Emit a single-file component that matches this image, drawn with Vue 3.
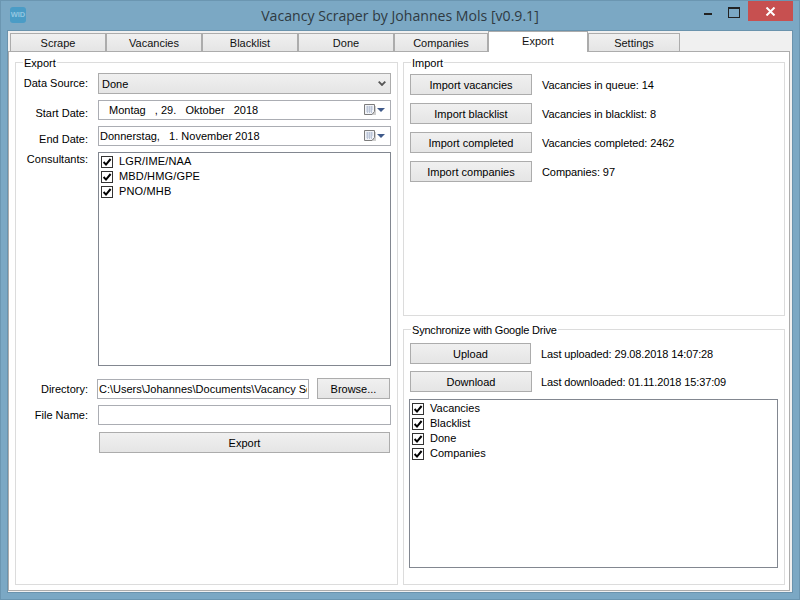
<template>
  <div class="window">
    <div class="titlebar">
      <div class="app-icon">WID</div>
      <div class="title">Vacancy Scraper by Johannes Mols [v0.9.1]</div>
      <div class="win-controls">
        <span class="win-min"></span>
        <span class="win-max"></span>
        <span class="win-close">
          <svg width="11" height="9" viewBox="0 0 11 9">
            <path d="M1.5 0.5 L9.5 8.5 M9.5 0.5 L1.5 8.5" stroke="#fff" stroke-width="2" fill="none" />
          </svg>
        </span>
      </div>
    </div>

    <div class="client">
      <div class="tabs">
        <div
          v-for="tab in tabs"
          :key="tab.name"
          class="tab"
          :class="{ active: tab.name === activeTab }"
          :style="{ width: tab.width + 'px' }"
        >
          {{ tab.name }}
        </div>
      </div>

      <div class="page">
        <div class="group group-export">
          <div class="legend">Export</div>

          <div class="row row-source">
            <label class="field-label">Data Source:</label>
            <div class="combo">
              <span>Done</span>
              <svg class="chevron" width="8" height="5" viewBox="0 0 8 5">
                <path d="M0.7 0.7 L4 4 L7.3 0.7" stroke="#555" stroke-width="1.8" fill="none" />
              </svg>
            </div>
          </div>

          <div v-for="d in dates" :key="d.label" class="row row-date">
            <label class="field-label date-label">{{ d.label }}</label>
            <div class="datebox" :class="d.cls">
              <span class="date-text">{{ d.text }}</span>
              <svg class="cal" width="21" height="14" viewBox="0 0 21 14">
                <path d="M2 3 H12 V12 H2 Z" fill="#d0d0d0" />
                <path d="M0.5 1.5 H10.5 V8.5 L8 11.5 H0.5 Z" fill="#f1f3f7" stroke="#7c7c7c" />
                <path d="M2 4 H9 M2 6 H9 M2 8 H8 M3.5 3 V10 M5.5 3 V10 M7.5 3 V10" stroke="#bcc6d8" />
                <path d="M13 5 H21 L17 9 Z" fill="#3f5a8a" />
              </svg>
            </div>
          </div>

          <div class="row row-consultants">
            <label class="field-label top-label">Consultants:</label>
            <div class="checklist consultants">
              <div v-for="c in consultants" :key="c" class="check-row">
                <svg class="check" width="12" height="12" viewBox="0 0 12 12">
                  <rect x="0.5" y="0.5" width="11" height="11" fill="#fff" stroke="#333" />
                  <path d="M2.6 6 L5 8.6 L9.6 3" stroke="#000" stroke-width="2" fill="none" />
                </svg>
                <span>{{ c }}</span>
              </div>
            </div>
          </div>

          <div class="row row-directory">
            <label class="field-label">Directory:</label>
            <input class="textbox dir-input" type="text" :value="directory" readonly />
            <button class="btn browse-btn" type="button">Browse...</button>
          </div>

          <div class="row row-file">
            <label class="field-label">File Name:</label>
            <input class="textbox file-input" type="text" />
          </div>

          <button class="btn export-btn" type="button">Export</button>
        </div>

        <div class="right-col">
          <div class="group group-import">
            <div class="legend">Import</div>
            <div v-for="item in imports" :key="item.button" class="action-row">
              <button class="btn action-btn" type="button">{{ item.button }}</button>
              <span class="action-text">{{ item.text }}</span>
            </div>
          </div>

          <div class="group group-sync">
            <div class="legend sync-legend">Synchronize with Google Drive</div>
            <div class="action-row sync-row">
              <button class="btn action-btn upload-btn" type="button">Upload</button>
              <span class="action-text">Last uploaded: 29.08.2018 14:07:28</span>
            </div>
            <div class="action-row sync-row">
              <button class="btn action-btn" type="button">Download</button>
              <span class="action-text">Last downloaded: 01.11.2018 15:37:09</span>
            </div>
            <div class="checklist sync-list">
              <div v-for="s in syncItems" :key="s" class="check-row">
                <svg class="check" width="12" height="12" viewBox="0 0 12 12">
                  <rect x="0.5" y="0.5" width="11" height="11" fill="#fff" stroke="#333" />
                  <path d="M2.6 6 L5 8.6 L9.6 3" stroke="#000" stroke-width="2" fill="none" />
                </svg>
                <span>{{ s }}</span>
              </div>
            </div>
          </div>
        </div>
      </div>
    </div>
  </div>
</template>

<script setup>
const activeTab = 'Export'

const tabs = [
  { name: 'Scrape', width: 96 },
  { name: 'Vacancies', width: 96 },
  { name: 'Blacklist', width: 96 },
  { name: 'Done', width: 96 },
  { name: 'Companies', width: 94 },
  { name: 'Export', width: 100 },
  { name: 'Settings', width: 92 }
]

const dates = [
  { label: 'Start Date:', text: 'Montag   , 29.   Oktober   2018', cls: 'date-start' },
  { label: 'End Date:', text: 'Donnerstag,   1. November 2018', cls: 'date-end' }
]

const consultants = ['LGR/IME/NAA', 'MBD/HMG/GPE', 'PNO/MHB']
const directory = 'C:\\Users\\Johannes\\Documents\\Vacancy Scraper'

const imports = [
  { button: 'Import vacancies', text: 'Vacancies in queue: 14' },
  { button: 'Import blacklist', text: 'Vacancies in blacklist: 8' },
  { button: 'Import completed', text: 'Vacancies completed: 2462' },
  { button: 'Import companies', text: 'Companies: 97' }
]

const syncItems = ['Vacancies', 'Blacklist', 'Done', 'Companies']
</script>

<style>
html,
body {
  margin: 0;
  background: #7ba8c4;
}
</style>

<style scoped>
.window {
  width: 800px;
  height: 600px;
  box-sizing: border-box;
  background: #7ba8c4;
  box-shadow: inset 0 0 0 1px #6b96b1;
  font-family: "Liberation Sans", Arial, sans-serif;
  font-size: 11px;
  line-height: 14px;
  color: #000;
  display: flex;
  flex-direction: column;
  overflow: hidden;
}

.titlebar {
  height: 31px;
  flex: none;
  position: relative;
  display: flex;
  justify-content: center;
}

.app-icon {
  position: absolute;
  left: 10px;
  top: 7px;
  width: 16px;
  height: 16px;
  border-radius: 3px;
  background: #4a9cc6;
  color: #93c6e0;
  font-size: 7.5px;
  font-weight: bold;
  line-height: 16px;
  text-align: center;
}

.title {
  font-family: "Open Sans", sans-serif;
  font-size: 14.1px;
  line-height: 31px;
  color: #2f3a42;
}

.win-controls {
  position: absolute;
  top: 1px;
  right: 7px;
  display: flex;
}

.win-min {
  position: absolute;
  right: 81px;
  top: 12px;
  width: 8px;
  height: 2px;
  background: #222;
}

.win-max {
  position: absolute;
  right: 53px;
  top: 6px;
  width: 10px;
  height: 8px;
  box-sizing: content-box;
  border: 1px solid #222;
  border-top-width: 2px;
}

.win-close {
  width: 45px;
  height: 20px;
  background: #c75050;
  display: flex;
  align-items: center;
  justify-content: center;
}

.client {
  margin: 0 8px 8px;
  flex: 1;
  min-height: 0;
  background: #f0f0f0;
  box-shadow: 0 0 0 1px #6a93ad;
  display: flex;
  flex-direction: column;
}

.tabs {
  height: 20px;
  flex: none;
  padding-left: 2px;
  display: flex;
  align-items: flex-end;
}

.tab {
  height: 18px;
  box-sizing: border-box;
  border: 1px solid #acacac;
  border-bottom: none;
  margin-right: 0;
  background: linear-gradient(#f0f0f0, #e5e5e5);
  text-align: center;
  line-height: 19px;
  color: #111;
}

.tab.active {
  height: 21px;
  margin-bottom: -1px;
  background: #fff;
  position: relative;
  z-index: 1;
  line-height: 18px;
}

.page {
  flex: 1;
  min-height: 0;
  margin-right: 2px;
  margin-bottom: 1px;
  box-sizing: border-box;
  background: #fff;
  border: 1px solid #acacac;
  padding: 10px 4px 5px 6px;
  display: grid;
  grid-template-columns: 383px 382px;
  column-gap: 5px;
}

.group {
  position: relative;
  box-sizing: border-box;
  border: 1px solid #dcdcdc;
}

.legend {
  position: absolute;
  left: 7px;
  top: -7px;
  padding: 0 1px 0 1px;
  background: #fff;
}

.sync-legend {
  letter-spacing: -0.2px;
}

.group-export {
  padding-top: 10px;
}

.row {
  display: flex;
  align-items: flex-start;
}

.field-label {
  width: 72px;
  margin-right: 10px;
  flex: none;
  text-align: right;
  padding-top: 3px;
}

.date-label {
  padding-top: 6px;
}

.top-label {
  padding-top: 0;
}

.combo {
  width: 293px;
  height: 21px;
  box-sizing: border-box;
  border: 1px solid #acacac;
  background: linear-gradient(#f0f0f0, #e5e5e5);
  padding-left: 3px;
  display: flex;
  align-items: center;
  justify-content: space-between;
}

.chevron {
  margin-right: 4px;
}

.row-date {
  margin-top: 6px;
}

.datebox {
  width: 293px;
  height: 20px;
  box-sizing: border-box;
  border: 1px solid #abadb3;
  background: #fff;
  display: flex;
  align-items: center;
  justify-content: space-between;
}

.date-text {
  white-space: pre;
}

.date-start {
  padding-left: 10px;
}

.date-end {
  padding-left: 1px;
}

.cal {
  margin-right: 5px;
}

.row-consultants {
  margin-top: 6px;
}

.checklist {
  box-sizing: border-box;
  border: 1px solid #828790;
  background: #fff;
  padding: 2px;
}

.consultants {
  width: 293px;
  height: 214px;
  letter-spacing: 0.15px;
}

.check-row {
  height: 15px;
  display: flex;
  align-items: flex-start;
}

.check {
  margin-top: 1px;
  flex: none;
}

.check-row span {
  margin-left: 6px;
  margin-top: -1px;
}

.row-directory {
  margin-top: 13px;
}

.textbox {
  box-sizing: border-box;
  height: 20px;
  border: 1px solid #abadb3;
  background: #fff;
  font: inherit;
  color: inherit;
  padding: 0 1px;
  margin: 0;
  outline: none;
}

.dir-input {
  width: 212px;
  margin-left: -1px;
}

.file-input {
  width: 293px;
}

.row-file {
  margin-top: 6px;
}

.btn {
  box-sizing: border-box;
  border: 1px solid #acacac;
  background: linear-gradient(#f0f0f0, #e5e5e5);
  font: inherit;
  color: #000;
  padding: 0;
  margin: 0;
  height: 21px;
}

.browse-btn {
  width: 73px;
  margin-left: 8px;
  margin-top: -1px;
}

.export-btn {
  display: block;
  width: 291px;
  margin: 7px 0 0 83px;
}

.right-col {
  display: flex;
  flex-direction: column;
  gap: 13px;
  min-height: 0;
}

.group-import {
  height: 254px;
  flex: none;
  padding-top: 11px;
}

.group-sync {
  flex: 1;
  padding-top: 13px;
}

.action-row {
  display: flex;
  align-items: center;
  height: 21px;
  margin: 0 0 8px 6px;
}

.action-btn {
  width: 122px;
  flex: none;
}

.upload-btn {
  width: 121px;
  margin-right: 1px;
}

.action-text {
  margin-left: 10px;
  letter-spacing: -0.08px;
}

.sync-row {
  margin-bottom: 7px;
}

.sync-row .action-text {
  margin-left: 9px;
  letter-spacing: -0.12px;
}

.sync-list {
  width: 369px;
  height: 169px;
  margin: 7px 0 0 5px;
  padding-top: 2px;
}
</style>
